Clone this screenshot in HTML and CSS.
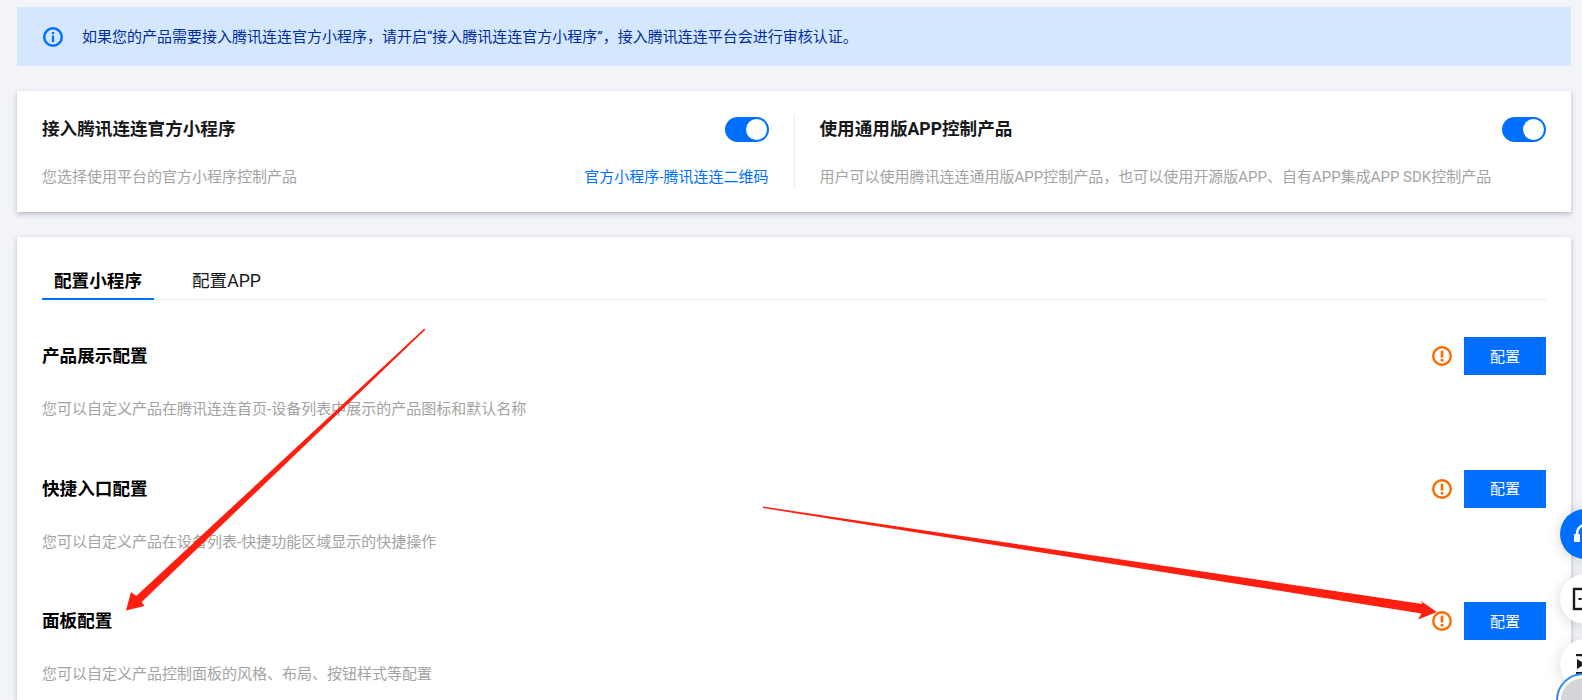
FILE: index.html
```html
<!DOCTYPE html>
<html lang="zh-CN">
<head>
<meta charset="utf-8">
<title>配置</title>
<link rel="stylesheet" href="styles.css">
</head>
<body>
<main class="page">
  <div class="banner">
    <svg class="banner-icon" viewBox="0 0 20 20" width="20" height="20"><circle cx="10" cy="10" r="8.8" fill="none" stroke="#006eff" stroke-width="2.4"/><rect x="8.9" y="8.5" width="2.2" height="6.5" fill="#006eff"/><rect x="8.9" y="5" width="2.2" height="2.2" fill="#006eff"/></svg>
    <span>如果您的产品需要接入腾讯连连官方小程序，请开启“接入腾讯连连官方小程序”，接入腾讯连连平台会进行审核认证。</span>
  </div>

  <section class="card switches">
    <div class="switch-cell">
      <div class="switch-head">
        <h2 class="switch-title">接入腾讯连连官方小程序</h2>
        <span class="toggle"><span class="knob"></span></span>
      </div>
      <div class="switch-foot">
        <span class="desc">您选择使用平台的官方小程序控制产品</span>
        <a class="link">官方小程序-腾讯连连二维码</a>
      </div>
    </div>
    <div class="divider"></div>
    <div class="switch-cell">
      <div class="switch-head">
        <h2 class="switch-title">使用通用版APP控制产品</h2>
        <span class="toggle"><span class="knob"></span></span>
      </div>
      <div class="switch-foot">
        <span class="desc">用户可以使用腾讯连连通用版APP控制产品，也可以使用开源版APP、自有APP集成APP SDK控制产品</span>
      </div>
    </div>
  </section>

  <section class="card config">
    <div class="tabs">
      <span class="tab active">配置小程序</span>
      <span class="tab">配置APP</span>
    </div>
    <div class="row">
      <div class="row-head">
        <h3 class="row-title">产品展示配置</h3>
        <svg class="warn" viewBox="0 0 20 20" width="20" height="20"><circle cx="10" cy="10" r="8.8" fill="none" stroke="#ff6a00" stroke-width="2.4"/><rect x="8.7" y="4.6" width="2.6" height="7" fill="#ff6a00"/><rect x="8.7" y="13" width="2.6" height="2.6" fill="#ff6a00"/></svg>
        <button class="btn">配置</button>
      </div>
      <p class="desc row-desc">您可以自定义产品在腾讯连连首页-设备列表中展示的产品图标和默认名称</p>
    </div>
    <div class="row">
      <div class="row-head">
        <h3 class="row-title">快捷入口配置</h3>
        <svg class="warn" viewBox="0 0 20 20" width="20" height="20"><circle cx="10" cy="10" r="8.8" fill="none" stroke="#ff6a00" stroke-width="2.4"/><rect x="8.7" y="4.6" width="2.6" height="7" fill="#ff6a00"/><rect x="8.7" y="13" width="2.6" height="2.6" fill="#ff6a00"/></svg>
        <button class="btn">配置</button>
      </div>
      <p class="desc row-desc">您可以自定义产品在设备列表-快捷功能区域显示的快捷操作</p>
    </div>
    <div class="row">
      <div class="row-head">
        <h3 class="row-title">面板配置</h3>
        <svg class="warn" viewBox="0 0 20 20" width="20" height="20"><circle cx="10" cy="10" r="8.8" fill="none" stroke="#ff6a00" stroke-width="2.4"/><rect x="8.7" y="4.6" width="2.6" height="7" fill="#ff6a00"/><rect x="8.7" y="13" width="2.6" height="2.6" fill="#ff6a00"/></svg>
        <button class="btn">配置</button>
      </div>
      <p class="desc row-desc">您可以自定义产品控制面板的风格、布局、按钮样式等配置</p>
    </div>
  </section>
</main>

<svg class="annot" viewBox="0 0 1582 700" width="1582" height="700">
  <polygon fill="#ff1f10" points="424.3,328.6 136.3,596.1 131,592 126,610.5 144.5,606 141.7,601.9 425.3,329.8"/>
  <polygon fill="#ff1f10" points="763,506.6 1422.5,604 1421,601 1436.8,612 1418,619.5 1421.5,613.5 763,508"/>
</svg>

<div class="float blue">
  <svg viewBox="0 0 30 30" width="30" height="30"><path d="M7 15a10 10 0 0 1 17-7" fill="none" stroke="#fff" stroke-width="2.4"/><rect x="4" y="15" width="6" height="8" rx="1" fill="#fff"/><path d="M17 10a6 6 0 0 1 6 6" fill="none" stroke="#fff" stroke-width="2.4"/></svg>
</div>
<div class="float white two">
  <svg viewBox="0 0 24 24" width="24" height="24"><rect x="2" y="2" width="20" height="20" fill="none" stroke="#1b1b1b" stroke-width="2.4"/><rect x="6.5" y="11" width="3" height="2" fill="#1b1b1b"/></svg>
</div>
<div class="float white three">
  <svg viewBox="0 0 24 24" width="24" height="24"><rect x="2" y="2" width="20" height="2.2" fill="#1b1b1b"/><rect x="2" y="20" width="20" height="2.2" fill="#1b1b1b"/><polygon points="3,7 3,17 11,12" fill="#1b1b1b"/></svg>
</div>
<div class="avatar"></div>
</body>
</html>
```
FILE: styles.css
```css
* { box-sizing: border-box; }
html, body { margin: 0; height: 700px; overflow: hidden; }
body {
  background: #f2f4f8;
  font-family: Roboto, "Noto Sans CJK SC", sans-serif;
  color: #000;
}
.page {
  padding: 7px 11px 0 17px;
  display: flex;
  flex-direction: column;
  gap: 25px;
  height: 700px;
}
.banner {
  height: 59px;
  flex: none;
  background: #d5e7ff;
  color: #002da0;
  font-size: 15px;
  line-height: 20px;
  display: flex;
  align-items: center;
  padding: 0 0 0 26px;
  gap: 19px;
}
.banner-icon { flex: none; }
.card {
  background: #fff;
  box-shadow: 0 2px 5px rgba(54, 58, 80, .32);
}
.switches {
  flex: none;
  height: 121px;
  padding: 23px 25px 25px;
  display: flex;
}
.switch-cell {
  flex: 1 1 0;
  min-width: 0;
  height: 73px;
  display: flex;
  flex-direction: column;
  justify-content: space-between;
}
.divider { width: 1px; background: #e7eaef; margin: 0 25px; flex: none; }
.switch-head, .switch-foot {
  display: flex;
  justify-content: space-between;
  align-items: center;
}
.switch-head { height: 30px; }
.switch-foot { height: 20px; }
.switch-title {
  margin: 0;
  font-size: 17.6px;
  font-weight: 700;
  color: #16181a;
  line-height: 30px;
}
.toggle {
  width: 44px;
  height: 25px;
  border-radius: 13px;
  background: #006eff;
  display: flex;
  align-items: center;
  justify-content: flex-end;
  padding-right: 2px;
}
.knob {
  width: 21px;
  height: 21px;
  border-radius: 50%;
  background: #fff;
}
.desc {
  font-size: 15px;
  line-height: 20px;
  color: #a3a3a3;
}
.link { font-size: 15px; line-height: 20px; color: #006eff; }
.config {
  flex: 1 1 auto;
  padding: 0 25px;
}
.tabs {
  height: 63px;
  border-bottom: 1px solid #e7eaef;
  display: flex;
  align-items: flex-end;
  gap: 26px;
}
.tab {
  font-size: 17.6px;
  line-height: 26px;
  padding: 0 12px 4px;
  margin-bottom: -1px;
  border-bottom: 2px solid transparent;
  color: #16181a;
}
.tab.active {
  font-weight: 700;
  color: #000;
  border-bottom-color: #006eff;
}
.row { height: 132.5px; padding-top: 37px; }
.row-head {
  height: 38px;
  display: flex;
  align-items: center;
}
.row-title {
  margin: 0 auto 3px 0;
  font-size: 17.6px;
  font-weight: 700;
  color: #000;
}
.warn { margin-right: 12px; flex: none; }
.btn {
  width: 82px;
  height: 38px;
  border: 0;
  padding: 0 0 2px;
  background: #006eff;
  color: #fff;
  font: inherit;
  font-size: 15px;
}
.row-desc { margin: 24px 0 0; }
.annot { position: fixed; left: 0; top: 0; pointer-events: none; }
.float {
  position: fixed;
  left: 1560px;
  width: 50px;
  height: 50px;
  border-radius: 50%;
  display: flex;
  align-items: center;
  padding-left: 10px;
  box-shadow: 0 2px 14px rgba(54, 58, 80, .2);
}
.float.blue { top: 509px; background: #006eff; padding-left: 10px; }
.float.white { background: #fff; }
.float.two { top: 574px; padding-left: 12px; }
.float.three { top: 639px; padding-left: 14px; }
.avatar {
  position: fixed;
  left: 1556px;
  top: 673px;
  width: 54px;
  height: 54px;
  border-radius: 50%;
  background: #d4d6da;
  border: 2px solid #2d8cf6;
  box-shadow: inset 0 0 0 3px #fff;
}
```
